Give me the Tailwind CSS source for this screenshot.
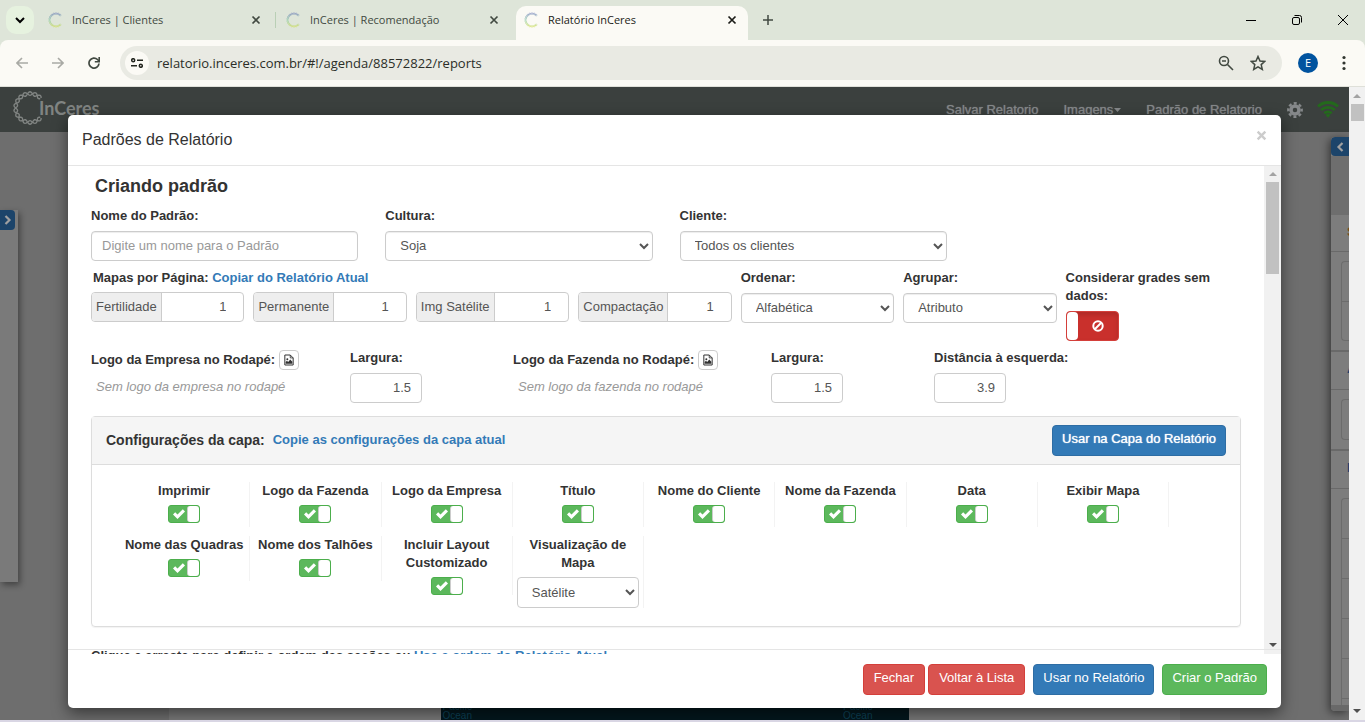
<!DOCTYPE html>
<html lang="pt-BR">
<head>
    <meta charset="UTF-8">
    <meta name="viewport" content="width=device-width, initial-scale=1.0">
    <title>Relatório InCeres</title>
    <script src="https://cdn.jsdelivr.net/npm/@tailwindcss/browser@4"></script>
</head>
<body class="h-screen flex flex-col overflow-hidden bg-[#d9d6e4] font-['Liberation_Sans',Arial,sans-serif] text-[13px] leading-[18px] text-[#333]">

    <!-- Ícones -->
    <svg class="absolute size-0">
        <linearGradient id="rainbow" x1="0" y1="0" x2="0" y2="1"><stop offset="0" stop-color="#6a78b8"/><stop offset=".5" stop-color="#7fc4a0"/><stop offset="1" stop-color="#cfdc4a"/></linearGradient>
        <symbol id="i-x" viewBox="0 0 10 10"><path d="M1.500 1.500l7 7M8.500 1.500l-7 7" stroke="currentColor" stroke-width="1.700"/></symbol>
        <symbol id="i-check" viewBox="0 0 14 12"><path d="M1 6.500L3.200 4.300 5.500 6.600 10.800 1.200 13 3.400 5.500 11z" fill="currentColor"/></symbol>
        <symbol id="i-file" viewBox="0 0 12 14"><path d="M1 1h6.500L11 4.500V13H1z" fill="none" stroke="currentColor" stroke-width="1.200"/><path d="M7.500 1v3.500H11" fill="none" stroke="currentColor"/><path d="M2 11.500V9.500l1.500-1.500 1.500 1.500L7.500 6.500 10 9v2.500z" fill="currentColor"/><circle cx="4" cy="6" r="1.200" fill="currentColor"/></symbol>
        <symbol id="i-helix" viewBox="0 0 40 40"><path data-phase="0" fill="none" stroke="currentColor" stroke-width="1.500"/><path data-phase="1" fill="none" stroke="currentColor" stroke-width="1.500"/></symbol>
        <symbol id="i-favicon" viewBox="0 0 40 40"><path data-phase="0" fill="none" stroke="url(#rainbow)" stroke-width="1.500"/><path data-phase="1" fill="none" stroke="url(#rainbow)" stroke-width="1.500"/></symbol>
    </svg>

    <!-- Abas do navegador -->
    <header class="font-['Open_Sans',sans-serif] text-[11px] text-[#414941]">
        <div class="h-10 flex items-end bg-[#dee5d9] pl-1.5">
            <button class="size-7 mb-1.5 mr-1.5 rounded-[10px] bg-[#e6f2df] grid place-items-center text-black" aria-label="Pesquisar guias">
                <svg class="size-3" viewBox="0 0 12 12"><path d="M2 4l4 4 4-4" fill="none" stroke="currentColor" stroke-width="2"/></svg>
            </button>
            <div class="w-[238px] h-10 flex items-center gap-2 pl-2 pr-0.5">
                <svg class="size-4"><use href="#i-favicon"/></svg>
                <span class="flex-1 whitespace-nowrap">InCeres | Clientes</span>
                <button aria-label="Fechar guia"><svg class="size-2.5"><use href="#i-x"/></svg></button>
                <span class="w-px h-4 bg-[#b9cfb5] ml-1.5"></span>
            </div>
            <div class="w-[238px] h-10 flex items-center gap-2 pl-2 pr-[17px]">
                <svg class="size-4"><use href="#i-favicon"/></svg>
                <span class="flex-1 whitespace-nowrap">InCeres | Recomendação</span>
                <button aria-label="Fechar guia"><svg class="size-2.5"><use href="#i-x"/></svg></button>
            </div>
            <div class="w-[232px] h-[34px] pb-1.5 flex items-center gap-2 pl-2 pr-[11px] rounded-t-[10px] bg-[#fbfaf5] text-[#1b1c18]">
                <svg class="size-4"><use href="#i-favicon"/></svg>
                <span class="flex-1 whitespace-nowrap">Relatório InCeres</span>
                <button aria-label="Fechar guia"><svg class="size-2.5"><use href="#i-x"/></svg></button>
            </div>
            <button class="h-10 ml-3.5" aria-label="Nova guia"><svg class="size-3" viewBox="0 0 12 12"><path d="M6 1v10M1 6h10" stroke="currentColor" stroke-width="1.500"/></svg></button>
            <div class="ml-auto h-10 flex items-center gap-9 pr-[17px] text-black">
                <svg class="size-2.5" viewBox="0 0 10 10"><path d="M0 5.500h10" stroke="currentColor"/></svg>
                <svg class="size-2.5" viewBox="0 0 10 10" fill="none" stroke="currentColor"><rect x=".5" y="2.500" width="7" height="7" rx="1.500"/><path d="M2.500.5h5a2 2 0 0 1 2 2v5"/></svg>
                <svg class="size-2.5" viewBox="0 0 10 10"><path d="M0 0l10 10M10 0L0 10" stroke="currentColor"/></svg>
            </div>
        </div>
        <div class="bg-[#dee5d9]">
            <div class="h-[47px] flex items-center rounded-t-lg bg-[#fbfaf5] border-b border-[#dfe0d9] pl-4 pr-[19px]">
                <svg class="size-3 mr-6 text-[#a9aaa5]" viewBox="0 0 12 12"><path d="M12 6H1M6 1L1 6l5 5" fill="none" stroke="currentColor" stroke-width="1.600"/></svg>
                <svg class="size-3 mr-6 text-[#a9aaa5]" viewBox="0 0 12 12"><path d="M0 6h11M6 1l5 5-5 5" fill="none" stroke="currentColor" stroke-width="1.600"/></svg>
                <svg class="size-3 mr-5" viewBox="0 0 12 12"><path d="M11 6.500A5 5 0 1 1 9.500 2.500L11 4" fill="none" stroke="#414941" stroke-width="1.700"/><path d="M11.200 0v4.700H6.800" fill="none" stroke="#414941" stroke-width="1.600"/></svg>
                <div class="flex-1 h-[34px] flex items-center rounded-full bg-[#e9eae3] pl-[5px] pr-4">
                    <span class="size-6 rounded-full bg-[#fbfaf5] grid place-items-center mr-2">
                        <svg class="w-3 h-2.5" viewBox="0 0 12 10" fill="none" stroke="#23261f" stroke-width="1.500"><circle cx="2.200" cy="2.200" r="1.500"/><path d="M6 2.200h6M0 7.800h6"/><circle cx="9.800" cy="7.800" r="1.500"/></svg>
                    </span>
                    <input type="text" aria-label="Endereço" class="flex-1 text-[13px] text-[#2b2e28]" value="relatorio.inceres.com.br/#!/agenda/88572822/reports">
                    <svg class="size-4 mr-4" viewBox="0 0 16 16" fill="none" stroke="#414941" stroke-width="1.600"><circle cx="6" cy="6" r="4.500"/><path d="M9.500 9.500L15 15M4 6h4"/></svg>
                    <svg class="size-4" viewBox="0 0 16 16"><path d="M8 1.500l2 4.500 4.800.4-3.600 3.200 1.100 4.800L8 11.900l-4.300 2.500 1.100-4.800L1.200 6.400 6 6z" fill="none" stroke="#414941" stroke-width="1.500"/></svg>
                </div>
                <span class="ml-4 size-5 rounded-full bg-[#00539f] text-white grid place-items-center">E</span>
                <svg class="ml-6 w-1 h-4" viewBox="0 0 4 16" fill="#30352f"><circle cx="2" cy="2.500" r="1.600"/><circle cx="2" cy="8" r="1.600"/><circle cx="2" cy="13.500" r="1.600"/></svg>
            </div>
        </div>
    </header>

    <div class="flex-1 min-h-0 flex mb-0.5">
        <main class="flex-1 relative overflow-hidden bg-[#6e6e6e]">
            <!-- Navbar da aplicação -->
            <nav class="h-[45px] flex items-center bg-[#3b403e] text-[#85888a] pl-3 pr-2.5">
                <a href="#" class="flex items-center pb-1 text-[#808482]">
                    <svg class="size-9 -mr-[9px]"><use href="#i-helix"/></svg>
                    <span class="font-['Lato',sans-serif] font-bold text-lg">InCeres</span>
                </a>
                <div class="ml-auto flex items-center [text-shadow:0_0_1px_currentColor]">
                    <a href="#" class="mr-[25px]">Salvar Relatorio</a>
                    <a href="#" class="mr-[25px] flex items-center gap-px">Imagens<svg class="w-[7px] h-1" viewBox="0 0 7 4"><path d="M0 0h7L3.500 4z" fill="currentColor"/></svg></a>
                    <a href="#" class="mr-[25px]">Padrão de Relatorio</a>
                    <svg class="size-4 mr-3.5" viewBox="0 0 16 16" fill="none" stroke="currentColor"><circle cx="8" cy="8" r="4" stroke-width="3.500"/><circle cx="8" cy="8" r="6.700" stroke-width="2.400" stroke-dasharray="3 2.262" stroke-dashoffset="1.500"/></svg>
                    <svg class="w-[22px] h-[17px]" viewBox="0 0 22 17" fill="none" stroke="#23691c" stroke-width="2.800"><path d="M1 5.500a14.500 14.500 0 0 1 20 0M4.200 9a10 10 0 0 1 13.600 0M7.300 12.300a5.600 5.600 0 0 1 7.400 0"/><path d="M8.500 14a4 4 0 0 1 5 0L11 16.800z" fill="#23691c" stroke="none"/></svg>
                </div>
            </nav>

            <!-- Folha com o mapa, atrás do modal -->
            <div class="absolute inset-x-[169px] bottom-0 h-9 bg-[#797979] flex justify-center">
                <div class="w-[468px] bg-[#03171d] flex justify-between items-end pl-0.5 pr-9 text-[10px] leading-[9px] text-[#0d4257]">
                    <span>Pacific<br>Ocean</span>
                    <span>Pacific<br>Ocean</span>
                </div>
            </div>

            <!-- Painéis laterais recolhidos -->
            <aside class="absolute left-0 top-[123px] w-[18px] h-[372px] bg-[#7a7a7a] shadow-[2px_3px_6px_rgba(0,0,0,.4)]">
                <button class="w-[15px] h-5 rounded-r-sm bg-[#1c446a] text-[#a0a0a0] grid place-items-center" aria-label="Abrir painel">
                    <svg class="w-2 h-2.5" viewBox="0 0 8 10"><path d="M1.500 1l4 4-4 4" fill="none" stroke="currentColor" stroke-width="2.200"/></svg>
                </button>
            </aside>
            <aside class="absolute right-0 top-[50px] bottom-[9px] w-[18px] bg-[#7d7d7d] rounded-l-sm shadow-[-2px_2px_8px_rgba(0,0,0,.5)] flex flex-col overflow-hidden">
                <button class="h-[19px] rounded-l-sm bg-[#1c446a] text-[#a0a0a0] grid place-items-center" aria-label="Abrir painel">
                    <svg class="w-2 h-2.5" viewBox="0 0 8 10"><path d="M6.500 1l-4 4 4 4" fill="none" stroke="currentColor" stroke-width="2.200"/></svg>
                </button>
                <div class="h-[59px] bg-[#6e6e6e]"></div>
                <div class="h-[37px] border-b border-[#696969] pl-4 pt-2 font-bold text-[#7a4a18]">S</div>
                <div class="h-[100px] py-[9px] pl-2.5 border-b-2 border-[#696969]"><div class="h-full rounded-l border border-r-0 border-[#6c6c6c]"><div class="h-10 border-b border-[#6c6c6c]"></div></div></div>
                <div class="h-[38px] border-b border-[#696969] pl-4 pt-2 font-bold text-[#1c3f6a]">A</div>
                <div class="h-[61px] py-[9px] pl-2.5 border-b-2 border-[#696969]"><div class="h-full rounded-l border border-r-0 border-[#6c6c6c]"></div></div>
                <div class="h-[38px] border-b border-[#696969] pl-4 pt-2 font-bold text-[#1c3f6a]">I</div>
                <div class="flex-1 pt-[9px] pl-2.5 border-b-6 border-[#696969]">
                    <div class="h-full rounded-tl border-l border-t border-[#6c6c6c]">
                        <div class="h-10 border-b border-[#6c6c6c]"></div>
                        <div class="h-10 border-b border-[#6c6c6c]"></div>
                        <div class="h-10 border-b border-[#6c6c6c]"></div>
                        <div class="h-10 border-b border-[#6c6c6c]"></div>
                        <div class="h-10 border-b border-[#6c6c6c]"></div>
                    </div>
                </div>
            </aside>

            <!-- Modal -->
            <div role="dialog" aria-labelledby="modalTitle" class="absolute inset-x-17 top-7 bottom-3 flex flex-col bg-white rounded-[5px] shadow-[0_5px_15px_rgba(0,0,0,.5)]">
                <div class="h-[51px] flex items-center justify-between pl-3.5 pr-3.5 border-b border-[#e5e5e5]">
                    <h4 id="modalTitle" class="text-base">Padrões de Relatório</h4>
                    <button class="pb-2.5 text-[#ccc]" aria-label="Fechar"><svg class="size-[11px]" viewBox="0 0 10 10"><path d="M1.500 1.500l7 7M8.500 1.500l-7 7" stroke="currentColor" stroke-width="2.200"/></svg></button>
                </div>

                <div class="flex-1 min-h-0 flex">
                    <div class="flex-1 overflow-hidden px-[23px] pt-2.5">
                        <h3 class="ml-1 text-lg leading-5 font-bold">Criando padrão</h3>

                        <div class="mt-[11px] grid grid-cols-4 gap-[27px]">
                            <div>
                                <label for="nome" class="block font-bold">Nome do Padrão:</label>
                                <input id="nome" type="text" placeholder="Digite um nome para o Padrão" class="mt-1.5 w-full h-[30px] px-2.5 pb-0.5 border border-[#ccc] rounded-sm shadow-[inset_0_1px_1px_rgba(0,0,0,.075)] placeholder:text-[#999]">
                            </div>
                            <div>
                                <label for="cultura" class="block font-bold">Cultura:</label>
                                <select id="cultura" class="mt-1.5 w-full h-[30px] px-2.5 pb-0.5 border border-[#ccc] rounded-sm text-[#555] shadow-[inset_0_1px_1px_rgba(0,0,0,.075)]"><option>Soja</option></select>
                            </div>
                            <div>
                                <label for="cliente" class="block font-bold">Cliente:</label>
                                <select id="cliente" class="mt-1.5 w-full h-[30px] px-2.5 pb-0.5 border border-[#ccc] rounded-sm text-[#555] shadow-[inset_0_1px_1px_rgba(0,0,0,.075)]"><option>Todos os clientes</option></select>
                            </div>
                        </div>

                        <div class="mt-2 pr-[22px] grid grid-cols-7 gap-[9px]">
                            <div class="col-span-4">
                                <p class="pl-0.5 font-bold">Mapas por Página: <a href="#" class="text-[#337ab7]">Copiar do Relatório Atual</a></p>
                                <div class="mt-[5px] grid grid-cols-4 gap-[9px]">
                                    <div class="flex h-[30px] border border-[#ccc] rounded-sm overflow-hidden text-[#555]">
                                        <label for="fertilidade" class="px-1 pt-[5px] bg-[#eee] border-r border-[#ccc]">Fertilidade</label>
                                        <input id="fertilidade" type="text" inputmode="numeric" value="1" class="flex-1 min-w-0 pr-[17px] text-right">
                                    </div>
                                    <div class="flex h-[30px] border border-[#ccc] rounded-sm overflow-hidden text-[#555]">
                                        <label for="permanente" class="px-1 pt-[5px] bg-[#eee] border-r border-[#ccc]">Permanente</label>
                                        <input id="permanente" type="text" inputmode="numeric" value="1" class="flex-1 min-w-0 pr-[17px] text-right">
                                    </div>
                                    <div class="flex h-[30px] border border-[#ccc] rounded-sm overflow-hidden text-[#555]">
                                        <label for="satelite" class="px-1 pt-[5px] bg-[#eee] border-r border-[#ccc] whitespace-nowrap">Img Satélite</label>
                                        <input id="satelite" type="text" inputmode="numeric" value="1" class="flex-1 min-w-0 pr-[17px] text-right">
                                    </div>
                                    <div class="flex h-[30px] border border-[#ccc] rounded-sm overflow-hidden text-[#555]">
                                        <label for="compactacao" class="px-1 pt-[5px] bg-[#eee] border-r border-[#ccc]">Compactação</label>
                                        <input id="compactacao" type="text" inputmode="numeric" value="1" class="flex-1 min-w-0 pr-[17px] text-right">
                                    </div>
                                </div>
                            </div>
                            <div>
                                <label for="ordenar" class="block font-bold">Ordenar:</label>
                                <select id="ordenar" class="mt-1.5 w-full h-[30px] px-2.5 pb-0.5 border border-[#ccc] rounded-sm text-[#555] shadow-[inset_0_1px_1px_rgba(0,0,0,.075)]"><option>Alfabética</option></select>
                            </div>
                            <div>
                                <label for="agrupar" class="block font-bold">Agrupar:</label>
                                <select id="agrupar" class="mt-1.5 w-full h-[30px] px-2.5 pb-0.5 border border-[#ccc] rounded-sm text-[#555] shadow-[inset_0_1px_1px_rgba(0,0,0,.075)]"><option>Atributo</option></select>
                            </div>
                            <label class="block font-bold">Considerar grades sem dados:
                                <input type="checkbox" class="sr-only">
                                <span class="mt-1.5 w-[53px] h-[30px] flex items-center rounded-sm border border-[#d43f3a] bg-[#c9302c] shadow-[inset_0_3px_5px_rgba(0,0,0,.125)]">
                                    <span class="w-[11px] h-7 rounded-sm bg-white"></span>
                                    <svg class="size-3 ml-3.5" viewBox="0 0 12 12" fill="none" stroke="#fff" stroke-width="2"><circle cx="6" cy="6" r="4.700"/><path d="M9 3L3 9"/></svg>
                                </span>
                            </label>
                        </div>

                        <div class="mt-2 grid grid-cols-[259fr_163fr_258fr_163fr_307fr]">
                            <div class="pt-px">
                                <p class="flex items-center gap-1 font-bold">Logo da Empresa no Rodapé:
                                    <button class="size-5 border border-[#ccc] rounded-sm grid place-items-center" aria-label="Escolher logo da empresa"><svg class="w-2.5 h-3"><use href="#i-file"/></svg></button>
                                </p>
                                <p class="mt-2 ml-[5px] italic text-[#999]">Sem logo da empresa no rodapé</p>
                            </div>
                            <div>
                                <label for="largura1" class="block font-bold">Largura:</label>
                                <input id="largura1" type="text" inputmode="decimal" value="1.5" class="mt-1.5 w-[72px] h-[30px] px-2.5 pb-0.5 text-right text-[#555] border border-[#ccc] rounded-sm">
                            </div>
                            <div class="pt-px">
                                <p class="flex items-center gap-1 font-bold">Logo da Fazenda no Rodapé:
                                    <button class="size-5 border border-[#ccc] rounded-sm grid place-items-center" aria-label="Escolher logo da fazenda"><svg class="w-2.5 h-3"><use href="#i-file"/></svg></button>
                                </p>
                                <p class="mt-2 ml-[5px] italic text-[#999]">Sem logo da fazenda no rodapé</p>
                            </div>
                            <div>
                                <label for="largura2" class="block font-bold">Largura:</label>
                                <input id="largura2" type="text" inputmode="decimal" value="1.5" class="mt-1.5 w-[72px] h-[30px] px-2.5 pb-0.5 text-right text-[#555] border border-[#ccc] rounded-sm">
                            </div>
                            <div>
                                <label for="distancia" class="block font-bold">Distância à esquerda:</label>
                                <input id="distancia" type="text" inputmode="decimal" value="3.9" class="mt-1.5 w-[72px] h-[30px] px-2.5 pb-0.5 text-right text-[#555] border border-[#ccc] rounded-sm">
                            </div>
                        </div>

                        <!-- Configurações da capa -->
                        <section class="mt-[13px] border border-[#ddd] rounded-sm shadow-[0_1px_1px_rgba(0,0,0,.05)]">
                            <div class="h-12 flex items-center px-3.5 bg-[#f5f5f5] border-b border-[#ddd] font-bold">
                                <h4 class="pb-0.5 text-sm">Configurações da capa:</h4>
                                <a href="#" class="ml-2 pb-0.5 text-[#337ab7]">Copie as configurações da capa atual</a>
                                <button class="ml-auto h-[31px] px-[9px] pb-1 rounded-sm border border-[#2e6da4] bg-[#337ab7] text-white font-normal [text-shadow:0_0_1px_#fff]">Usar na Capa do Relatório</button>
                            </div>
                            <div class="pt-[17px] pb-[18px] pl-[27px] pr-[71px] grid grid-cols-8 gap-y-[9px] items-start text-center font-bold">
                                <label class="min-h-[45px] px-1 border-r border-[#f3f3f3] flex flex-col items-center gap-[5px]">Imprimir
                                    <input type="checkbox" checked class="sr-only">
                                    <span class="w-8 h-[18px] flex items-center justify-between pl-[3px] rounded-[3px] border border-[#4cae4c] bg-[#5cb85c] text-white"><svg class="w-3.5 h-3"><use href="#i-check"/></svg><span class="w-3 h-4 rounded-[3px] border-l border-[#ccc] bg-white"></span></span>
                                </label>
                                <label class="min-h-[45px] px-1 border-r border-[#f3f3f3] flex flex-col items-center gap-[5px]">Logo da Fazenda
                                    <input type="checkbox" checked class="sr-only">
                                    <span class="w-8 h-[18px] flex items-center justify-between pl-[3px] rounded-[3px] border border-[#4cae4c] bg-[#5cb85c] text-white"><svg class="w-3.5 h-3"><use href="#i-check"/></svg><span class="w-3 h-4 rounded-[3px] border-l border-[#ccc] bg-white"></span></span>
                                </label>
                                <label class="min-h-[45px] px-1 border-r border-[#f3f3f3] flex flex-col items-center gap-[5px]">Logo da Empresa
                                    <input type="checkbox" checked class="sr-only">
                                    <span class="w-8 h-[18px] flex items-center justify-between pl-[3px] rounded-[3px] border border-[#4cae4c] bg-[#5cb85c] text-white"><svg class="w-3.5 h-3"><use href="#i-check"/></svg><span class="w-3 h-4 rounded-[3px] border-l border-[#ccc] bg-white"></span></span>
                                </label>
                                <label class="min-h-[45px] px-1 border-r border-[#f3f3f3] flex flex-col items-center gap-[5px]">Título
                                    <input type="checkbox" checked class="sr-only">
                                    <span class="w-8 h-[18px] flex items-center justify-between pl-[3px] rounded-[3px] border border-[#4cae4c] bg-[#5cb85c] text-white"><svg class="w-3.5 h-3"><use href="#i-check"/></svg><span class="w-3 h-4 rounded-[3px] border-l border-[#ccc] bg-white"></span></span>
                                </label>
                                <label class="min-h-[45px] px-1 border-r border-[#f3f3f3] flex flex-col items-center gap-[5px]">Nome do Cliente
                                    <input type="checkbox" checked class="sr-only">
                                    <span class="w-8 h-[18px] flex items-center justify-between pl-[3px] rounded-[3px] border border-[#4cae4c] bg-[#5cb85c] text-white"><svg class="w-3.5 h-3"><use href="#i-check"/></svg><span class="w-3 h-4 rounded-[3px] border-l border-[#ccc] bg-white"></span></span>
                                </label>
                                <label class="min-h-[45px] px-1 border-r border-[#f3f3f3] flex flex-col items-center gap-[5px]">Nome da Fazenda
                                    <input type="checkbox" checked class="sr-only">
                                    <span class="w-8 h-[18px] flex items-center justify-between pl-[3px] rounded-[3px] border border-[#4cae4c] bg-[#5cb85c] text-white"><svg class="w-3.5 h-3"><use href="#i-check"/></svg><span class="w-3 h-4 rounded-[3px] border-l border-[#ccc] bg-white"></span></span>
                                </label>
                                <label class="min-h-[45px] px-1 border-r border-[#f3f3f3] flex flex-col items-center gap-[5px]">Data
                                    <input type="checkbox" checked class="sr-only">
                                    <span class="w-8 h-[18px] flex items-center justify-between pl-[3px] rounded-[3px] border border-[#4cae4c] bg-[#5cb85c] text-white"><svg class="w-3.5 h-3"><use href="#i-check"/></svg><span class="w-3 h-4 rounded-[3px] border-l border-[#ccc] bg-white"></span></span>
                                </label>
                                <label class="min-h-[45px] px-1 border-r border-[#f3f3f3] flex flex-col items-center gap-[5px]">Exibir Mapa
                                    <input type="checkbox" checked class="sr-only">
                                    <span class="w-8 h-[18px] flex items-center justify-between pl-[3px] rounded-[3px] border border-[#4cae4c] bg-[#5cb85c] text-white"><svg class="w-3.5 h-3"><use href="#i-check"/></svg><span class="w-3 h-4 rounded-[3px] border-l border-[#ccc] bg-white"></span></span>
                                </label>
                                <label class="min-h-[45px] px-1 border-r border-[#f3f3f3] flex flex-col items-center gap-[5px]">Nome das Quadras
                                    <input type="checkbox" checked class="sr-only">
                                    <span class="w-8 h-[18px] flex items-center justify-between pl-[3px] rounded-[3px] border border-[#4cae4c] bg-[#5cb85c] text-white"><svg class="w-3.5 h-3"><use href="#i-check"/></svg><span class="w-3 h-4 rounded-[3px] border-l border-[#ccc] bg-white"></span></span>
                                </label>
                                <label class="min-h-[45px] px-1 border-r border-[#f3f3f3] flex flex-col items-center gap-[5px]">Nome dos Talhões
                                    <input type="checkbox" checked class="sr-only">
                                    <span class="w-8 h-[18px] flex items-center justify-between pl-[3px] rounded-[3px] border border-[#4cae4c] bg-[#5cb85c] text-white"><svg class="w-3.5 h-3"><use href="#i-check"/></svg><span class="w-3 h-4 rounded-[3px] border-l border-[#ccc] bg-white"></span></span>
                                </label>
                                <label class="min-h-[45px] px-1 border-r border-[#f3f3f3] flex flex-col items-center gap-[5px]">Incluir Layout Customizado
                                    <input type="checkbox" checked class="sr-only">
                                    <span class="w-8 h-[18px] flex items-center justify-between pl-[3px] rounded-[3px] border border-[#4cae4c] bg-[#5cb85c] text-white"><svg class="w-3.5 h-3"><use href="#i-check"/></svg><span class="w-3 h-4 rounded-[3px] border-l border-[#ccc] bg-white"></span></span>
                                </label>
                                <label class="px-1 border-r border-[#f3f3f3] flex flex-col items-center gap-[5px]">Visualização de Mapa
                                    <select class="w-full h-[31px] px-2.5 border border-[#ccc] rounded-sm font-normal text-[#555]"><option>Satélite</option></select>
                                </label>
                            </div>
                        </section>

                        <p class="mt-5 whitespace-nowrap font-bold">Clique e arraste para definir a ordem das seções ou <a href="#" class="text-[#337ab7]">Use a ordem do Relatório Atual</a></p>
                    </div>

                    <!-- Barra de rolagem do modal -->
                    <div class="w-[17px] flex flex-col items-center bg-[#f1f1f1]">
                        <svg class="w-2 h-4" viewBox="0 0 8 16"><path d="M0 10h8L4 6z" fill="#a3a3a3"/></svg>
                        <div class="w-[13px] h-[92px] bg-[#c1c1c1]"></div>
                        <svg class="w-2 h-4 mt-auto" viewBox="0 0 8 16"><path d="M0 5h8L4 9z" fill="#505050"/></svg>
                    </div>
                </div>

                <div class="-mt-[5px] h-[59px] flex justify-end items-start pt-3.5 pr-3.5 border-t border-[#e5e5e5] text-white [text-shadow:0_0_1px_#fff]">
                    <button class="h-[31px] px-2.5 pb-1 rounded-sm border border-[#d43f3a] bg-[#d9534f]">Fechar</button>
                    <button class="ml-[3px] h-[31px] px-2.5 pb-1 rounded-sm border border-[#d43f3a] bg-[#d9534f]">Voltar à Lista</button>
                    <button class="ml-2 h-[31px] px-[9px] pb-1 rounded-sm border border-[#2e6da4] bg-[#337ab7]">Usar no Relatório</button>
                    <button class="ml-2 h-[31px] px-[9px] pb-1 rounded-sm border border-[#4cae4c] bg-[#5cb85c]">Criar o Padrão</button>
                </div>
            </div>
        </main>

        <!-- Barra de rolagem da página -->
        <div class="w-4 flex flex-col items-center bg-[#f1f1f1]">
            <svg class="w-2 h-[17px]" viewBox="0 0 8 17"><path d="M0 11h8L4 7z" fill="#a3a3a3"/></svg>
            <div class="w-[13px] h-[17px] bg-[#c1c1c1]"></div>
            <svg class="w-2 h-[17px] mt-auto" viewBox="0 0 8 17"><path d="M0 6h8l-4 4z" fill="#505050"/></svg>
        </div>
    </div>

    <script>
        // Desenha as duas fitas da hélice do logo, abertas do lado direito
        document.querySelectorAll('[data-phase]').forEach(function (path) {
            const phase = Number(path.dataset.phase) * Math.PI;
            let d = '';
            for (let a = 42; a <= 318; a += 3) {
                const t = a * Math.PI / 180;
                const r = 16 + 2 * Math.sin(t * 9 + phase);
                d += (d ? 'L' : 'M') + (20 + r * Math.cos(t)).toFixed(1) + ' ' + (20 + r * Math.sin(t)).toFixed(1);
            }
            path.setAttribute('d', d);
        });
    </script>
</body>
</html>
